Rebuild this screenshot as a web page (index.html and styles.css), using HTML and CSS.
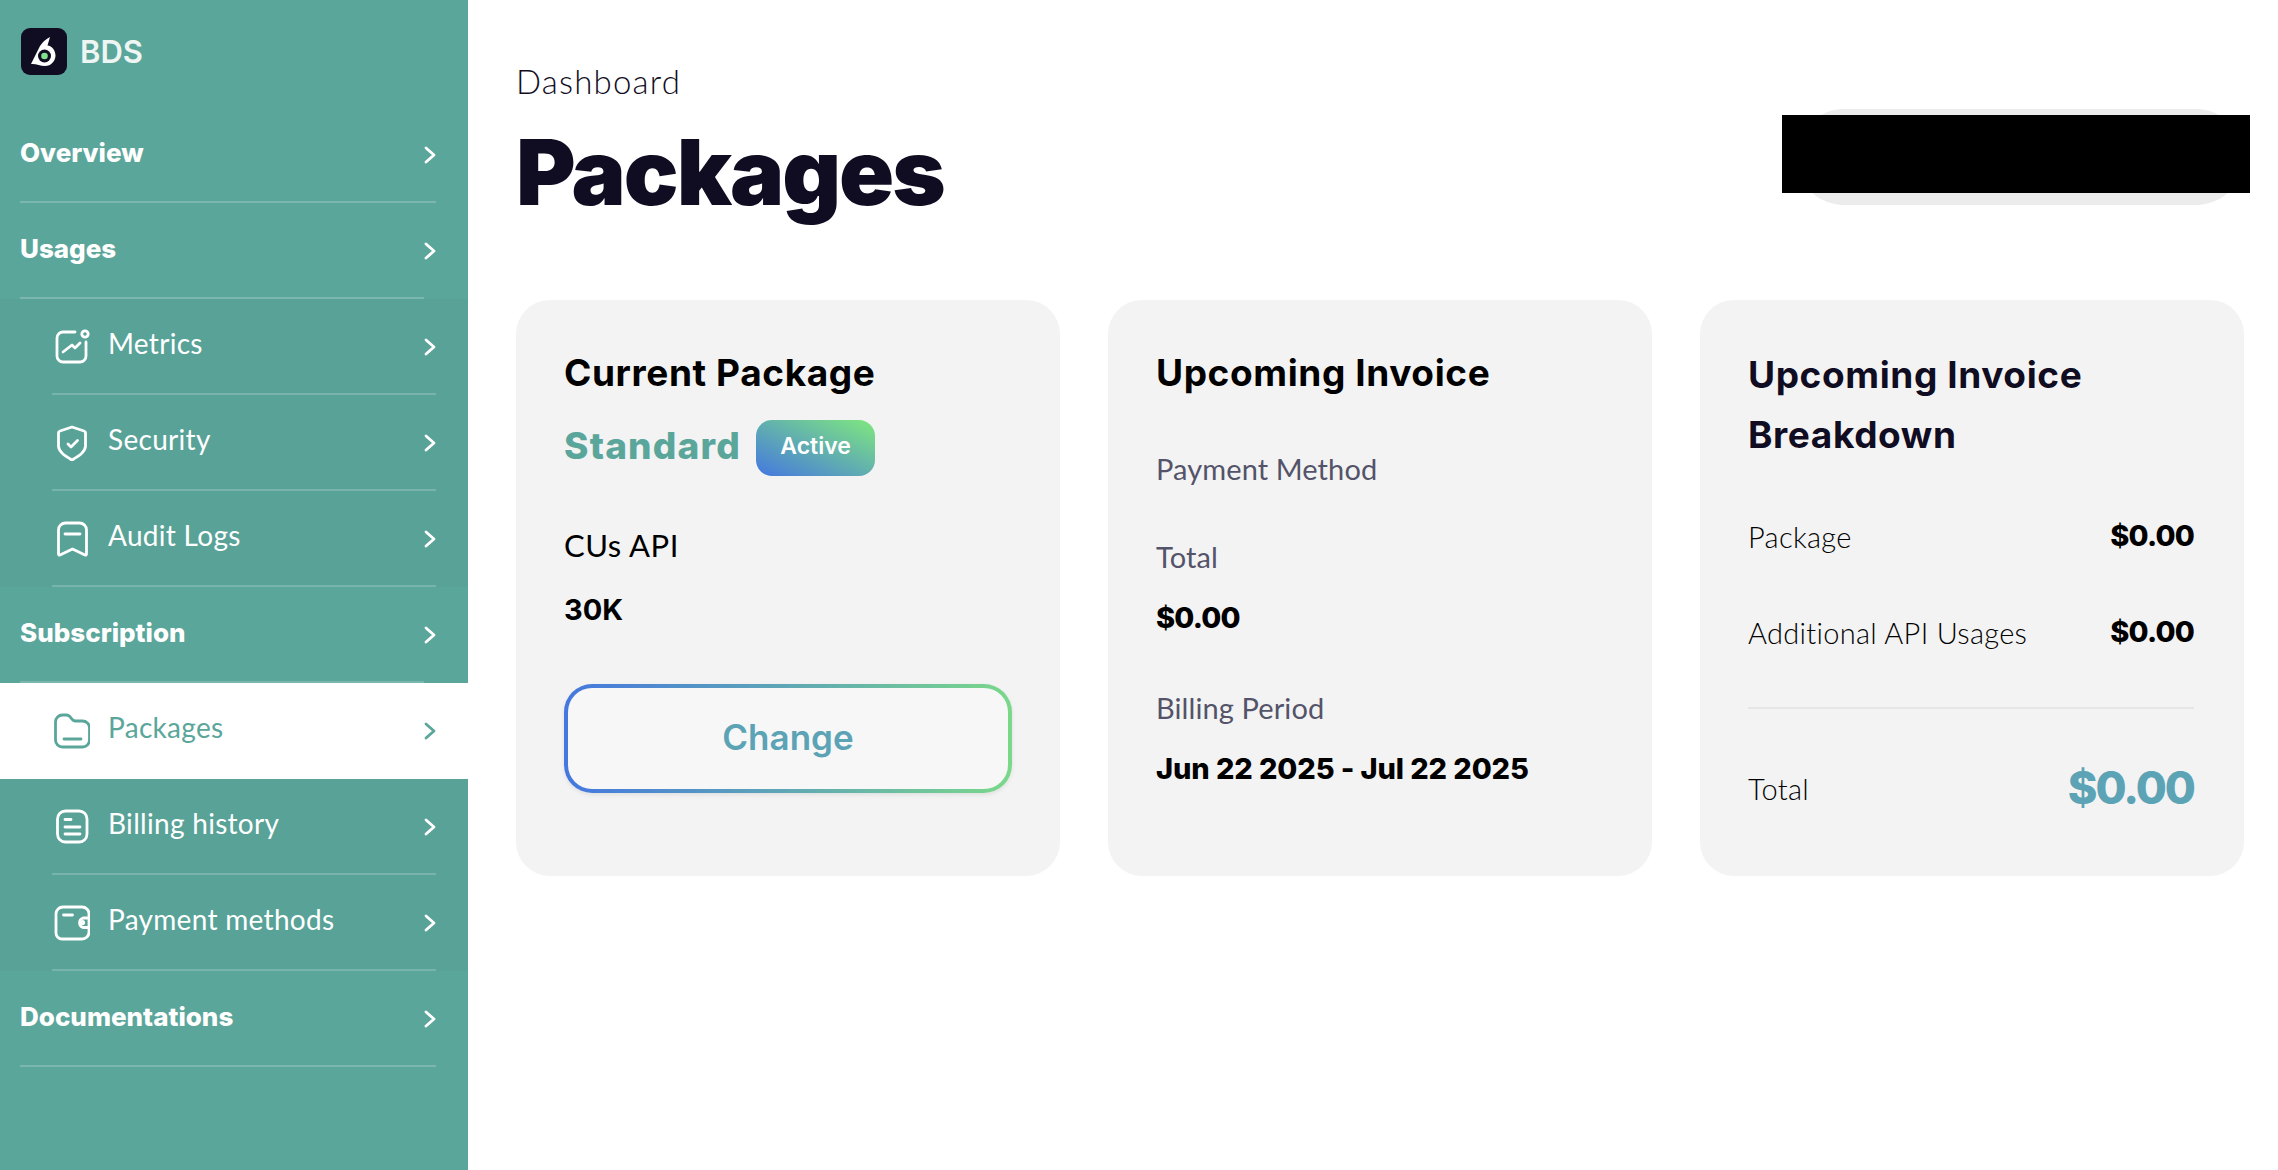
FILE: index.html
```html
<!DOCTYPE html>
<html lang="en">
<head>
<meta charset="utf-8">
<title>Packages</title>
<link rel="stylesheet" href="styles.css">
</head>
<body>
<svg class="defs" width="0" height="0" aria-hidden="true">
  <symbol id="chev" viewBox="0 0 12 18"><path d="M2 2l8 7-8 7" fill="none" stroke="currentColor" stroke-width="2.8" stroke-linecap="round" stroke-linejoin="round"/></symbol>
</svg>
<div class="app">
  <aside class="sidebar">
    <div class="brand">
      <svg class="logo" viewBox="0 0 46 47"><rect width="46" height="47" rx="9" fill="#100c22"/><path d="M10 36L19 18Q23 12 29 9L26.500 17.500C31 18 34.500 22.500 34.500 27.500 34.500 33 30 38 24 38 19 38 15 35.500 10 36z" fill="#fff"/><circle cx="23.500" cy="28" r="6.500" fill="#100c22"/><circle cx="23.500" cy="28" r="3.300" fill="#7fe08e"/></svg>
      <span class="brand-name">BDS</span>
    </div>
    <nav>
      <a class="row top"><span class="label">Overview</span><svg class="chev"><use href="#chev"/></svg></a>
      <a class="row top short"><span class="label">Usages</span><svg class="chev"><use href="#chev"/></svg></a>
      <div class="group">
        <a class="row sub"><svg class="ico" viewBox="0 0 36 36"><path d="M21 3H9a6 6 0 0 0-6 6v18a6 6 0 0 0 6 6h17a6 6 0 0 0 6-6V13"/><circle cx="31" cy="5" r="3.200"/><path d="M9 23l9-7 3 3 5-5"/></svg><span class="label">Metrics</span><svg class="chev"><use href="#chev"/></svg></a>
        <a class="row sub"><svg class="ico" viewBox="0 0 36 36"><path d="M18 2l12 4a2 2 0 0 1 1.500 2v13c0 6-7 10-13.500 14C11.500 31 4.500 27 4.500 21V8A2 2 0 0 1 6 6z"/><path d="M14 19l3 3 6.500-6.500"/></svg><span class="label">Security</span><svg class="chev"><use href="#chev"/></svg></a>
        <a class="row sub"><svg class="ico" viewBox="0 0 36 36"><path d="M4.500 33V9a7 7 0 0 1 7-7h14a7 7 0 0 1 7 7v24a1 1 0 0 1-1.500 1L18.500 28 6 34a1 1 0 0 1-1.500-1z"/><path d="M11 13h15"/></svg><span class="label">Audit Logs</span><svg class="chev"><use href="#chev"/></svg></a>
      </div>
      <a class="row top short"><span class="label">Subscription</span><svg class="chev"><use href="#chev"/></svg></a>
      <div class="group">
        <a class="row sub active"><svg class="ico" viewBox="0 0 36 36"><path d="M1.500 9a7 7 0 0 1 7-7h4c5 0 4 6 9 6h7a7 7 0 0 1 7 7v12a7 7 0 0 1-7 7h-20a7 7 0 0 1-7-7z"/><path d="M10 26h17"/></svg><span class="label">Packages</span><svg class="chev"><use href="#chev"/></svg></a>
        <a class="row sub"><svg class="ico" viewBox="0 0 36 36"><rect x="3.500" y="2" width="29.500" height="31" rx="8"/><path d="M11 10.500h6M11 18h15M11 25h15"/></svg><span class="label">Billing history</span><svg class="chev"><use href="#chev"/></svg></a>
        <a class="row sub"><svg class="ico" viewBox="0 0 36 36"><path d="M35 9a7 7 0 0 0-7-7H9A7 7 0 0 0 2 9v19a6 6 0 0 0 6 6h20a7 7 0 0 0 7-7z"/><path d="M9.500 10h9M35 13h-6a5 5 0 0 0 0 9.500h6"/><circle cx="28.500" cy="17.500" r="1.200"/></svg><span class="label">Payment methods</span><svg class="chev"><use href="#chev"/></svg></a>
      </div>
      <a class="row top"><span class="label">Documentations</span><svg class="chev"><use href="#chev"/></svg></a>
    </nav>
  </aside>
  <main class="main">
    <header class="head">
      <div>
        <div class="crumb">Dashboard</div>
        <h1 class="title">Packages</h1>
      </div>
      <div class="account"><div class="redact"></div></div>
    </header>
    <section class="cards">
      <article class="card">
        <h2 class="card-title">Current Package</h2>
        <div class="plan"><span class="plan-name">Standard</span><span class="badge">Active</span></div>
        <div class="cu-label">CUs API</div>
        <div class="cu-value">30K</div>
        <button class="change"><span>Change</span></button>
      </article>
      <article class="card">
        <h2 class="card-title">Upcoming Invoice</h2>
        <div class="muted pm">Payment Method</div>
        <div class="muted total">Total</div>
        <div class="strong amt">$0.00</div>
        <div class="muted period">Billing Period</div>
        <div class="strong dates">Jun 22 2025 - Jul 22 2025</div>
      </article>
      <article class="card">
        <h2 class="card-title dark">Upcoming Invoice Breakdown</h2>
        <div class="line first"><span>Package</span><span class="strong">$0.00</span></div>
        <div class="line"><span>Additional API Usages</span><span class="strong">$0.00</span></div>
        <div class="line sum"><span>Total</span><span class="big">$0.00</span></div>
      </article>
    </section>
  </main>
</div>
</body>
</html>
```
FILE: styles.css
```css
* { box-sizing: border-box; }
html, body { margin: 0; height: 100%; }
body { font-family: "Lato", "Liberation Sans", sans-serif; background: #fff; color: #000; overflow: hidden; }
.defs { position: absolute; }
.app { display: flex; height: 1170px; }
.sidebar { width: 468px; flex: none; background: #5ba69b; color: #fff; }
.brand { display: flex; align-items: center; gap: 13px; height: 107px; padding: 0 0 4px 21px; }
.logo { width: 46px; height: 47px; flex: none; }
.brand-name { font-family: "Inter", sans-serif; font-weight: 600; font-size: 31px; color: #eef5f3; }
.group { background: #58a298; }
.row { display: flex; align-items: center; height: 96px; position: relative; color: #fff; padding: 0 32px 0 20px; }
.row::after { content: ""; position: absolute; left: 20px; right: 32px; bottom: 0; height: 2px; background: rgba(255,255,255,.2); }
.row.short::after { right: 44px; }
.row.sub { padding-left: 54px; }
.row.sub::after { left: 52px; }
.row.active { background: #fff; color: #5ba69b; }
.row.active::after { display: none; }
.label { flex: 1; font-size: 28px; padding-bottom: 6px; }
.top .label { font-family: "Inter", sans-serif; font-weight: 800; font-size: 26px; letter-spacing: 0; }
.sub .label { margin-left: 18px; font-weight: 400; letter-spacing: .3px; padding-bottom: 8px; }
.chev { width: 12px; height: 18px; flex: none; }
.ico { width: 36px; height: 36px; flex: none; fill: none; stroke: currentColor; stroke-width: 2.800; stroke-linecap: round; stroke-linejoin: round; }
.main { flex: 1; padding: 0 34px 0 48px; }
.head { display: flex; justify-content: space-between; height: 300px; padding-top: 61px; }
.crumb { font-size: 33px; font-weight: 300; letter-spacing: 1.2px; color: #100c22; line-height: 40px; }
.title { margin: 16px 0 0; font-family: "Inter", sans-serif; font-size: 91px; font-weight: 900; letter-spacing: -2px; line-height: 110px; color: #100c22; }
.account { width: 448px; height: 96px; margin: 48px 0 0; border-radius: 48px; background: #ececec; position: relative; }
.redact { position: absolute; left: -14px; right: -6px; top: 6px; height: 78px; background: #000; }
.cards { display: grid; grid-template-columns: repeat(3, 544px); gap: 48px; }
.card { height: 576px; background: #f3f3f3; border-radius: 34px; padding: 43px 50px 0 48px; }
.card-title { margin: 0; font-family: "Inter", sans-serif; font-size: 37px; line-height: 60px; font-weight: 700; letter-spacing: .6px; color: #000; }
.card-title.dark { color: #100c22; margin-top: 2px; }
.plan { display: flex; align-items: center; gap: 15px; margin-top: 17px; }
.plan-name { font-family: "Inter", sans-serif; font-size: 37px; font-weight: 800; letter-spacing: 1.200px; color: #5ba69b; padding-bottom: 6px; }
.badge { width: 119px; height: 56px; border-radius: 16px; background: linear-gradient(to top right, #4477e0, #7fe87e); color: #fff; font-family: "Inter", sans-serif; font-size: 23px; font-weight: 600; display: flex; align-items: center; justify-content: center; padding-bottom: 4px; }
.cu-label { margin-top: 49px; font-size: 31px; letter-spacing: .5px; line-height: 40px; }
.cu-value { margin-top: 25px; font-family: "Inter", sans-serif; font-size: 29px; line-height: 40px; font-weight: 700; }
.change { display: block; width: 448px; height: 109px; margin-top: 54px; padding: 4px; border: 0; border-radius: 28px; background: linear-gradient(to right, #4477e0, #7ad88a); box-shadow: 0 2px 4px rgba(0,0,0,.08); }
.change span { display: flex; align-items: center; justify-content: center; height: 100%; padding-bottom: 4px; border-radius: 24px; background: #f7f7f7; color: #5ba3b5; font-family: "Inter", sans-serif; font-size: 35px; font-weight: 600; }
.muted { font-size: 29px; letter-spacing: .1px; line-height: 40px; color: #53536a; }
.strong { font-family: "Inter", sans-serif; font-size: 29px; line-height: 40px; font-weight: 800; letter-spacing: -.8px; color: #000; }
.pm { margin-top: 46px; }
.total { margin-top: 48px; }
.amt { margin-top: 21px; }
.period { margin-top: 50px; }
.dates { margin-top: 21px; letter-spacing: -.1px; }
.line { display: flex; justify-content: space-between; align-items: center; font-size: 29px; font-weight: 300; color: #000; letter-spacing: .3px; }
.line.first { margin-top: 51px; }
.line + .line { margin-top: 56px; }
.line.sum { margin-top: 55px; padding-top: 54px; border-top: 2px solid #e6e6e6; }
.big { font-family: "Inter", sans-serif; font-size: 45px; font-weight: 800; letter-spacing: -2px; color: #5ba3b5; line-height: 50px; }
```
